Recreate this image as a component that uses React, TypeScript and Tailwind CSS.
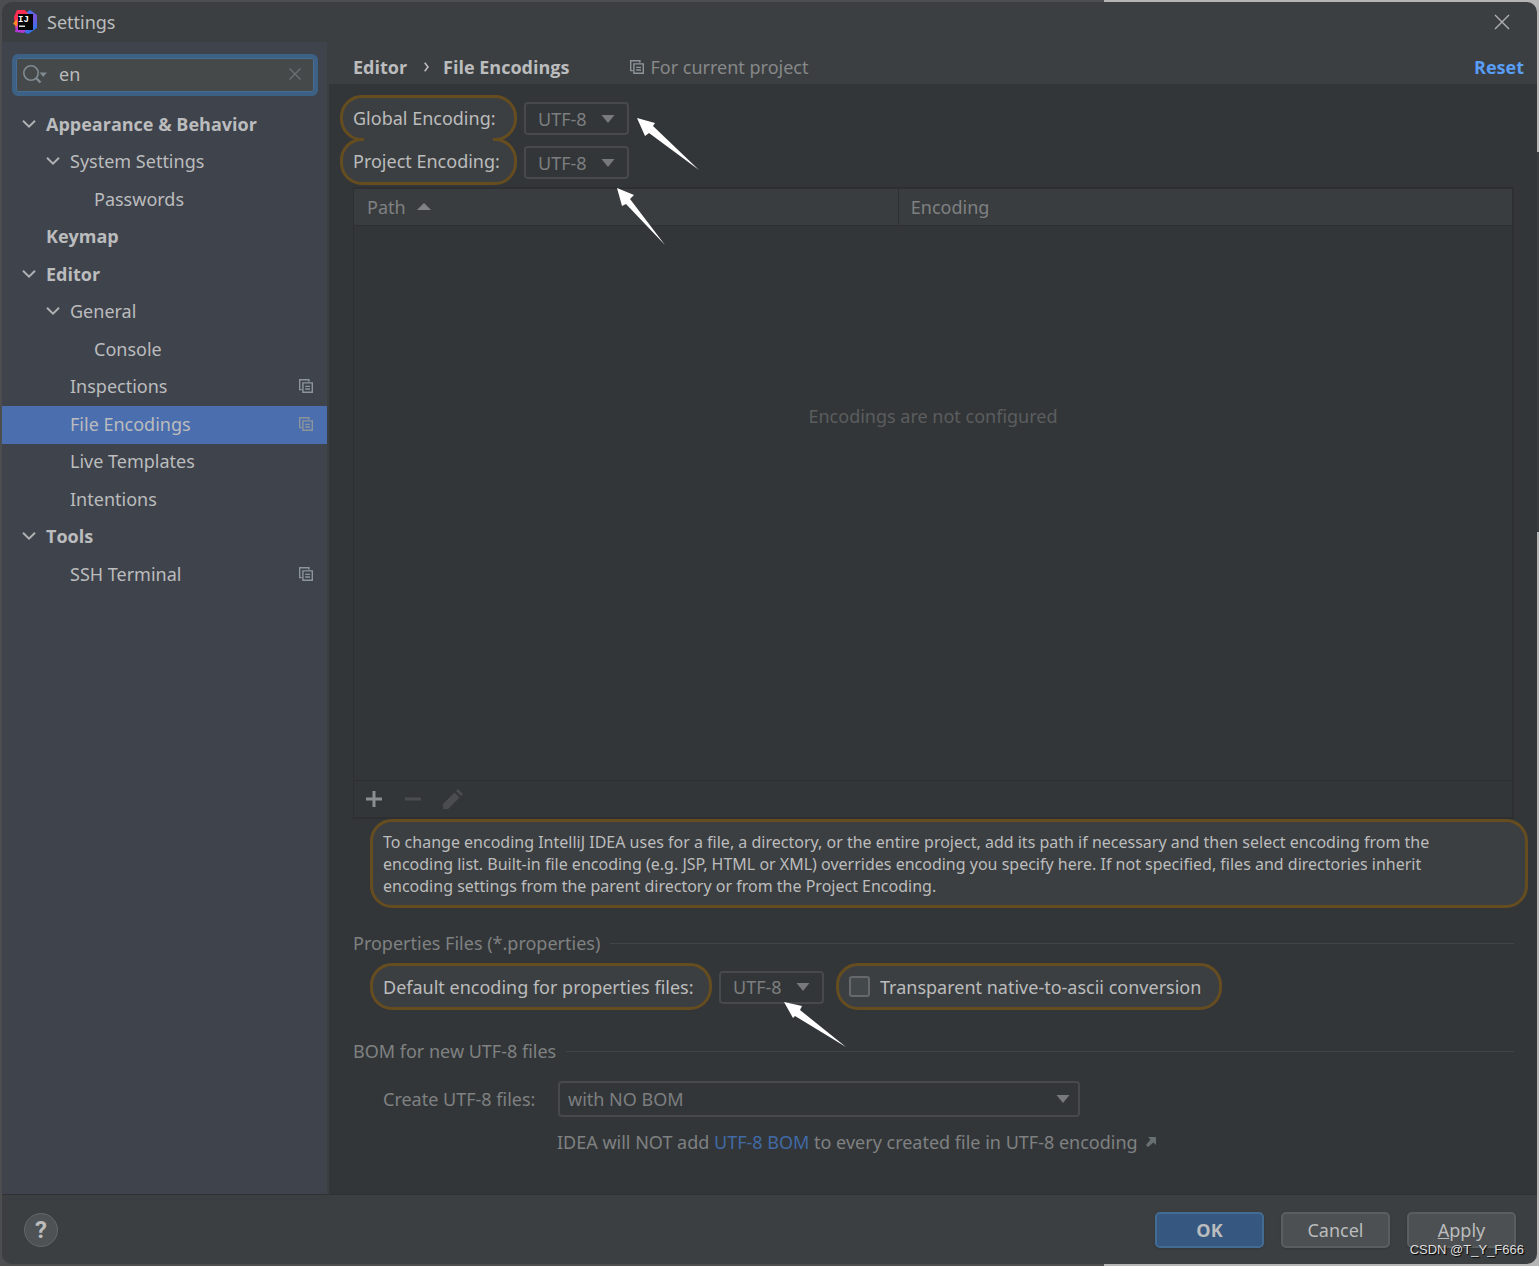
import { useState } from 'react';

type TreeItem = {
  label: string;
  depth: number;
  open?: boolean;
  bold?: boolean;
  project?: boolean;
};

const tree: TreeItem[] = [
  { label: 'Appearance & Behavior', depth: 0, open: true, bold: true },
  { label: 'System Settings', depth: 1, open: true },
  { label: 'Passwords', depth: 2 },
  { label: 'Keymap', depth: 0, bold: true },
  { label: 'Editor', depth: 0, open: true, bold: true },
  { label: 'General', depth: 1, open: true },
  { label: 'Console', depth: 2 },
  { label: 'Inspections', depth: 1, project: true },
  { label: 'File Encodings', depth: 1, project: true },
  { label: 'Live Templates', depth: 1 },
  { label: 'Intentions', depth: 1 },
  { label: 'Tools', depth: 0, open: true, bold: true },
  { label: 'SSH Terminal', depth: 1, project: true },
];

const indent = ['pl-5', 'pl-11', 'pl-[68px]'];

const encodings = ['UTF-8', 'GBK', 'ISO-8859-1'];

function Logo() {
  return (
    <svg className="size-6" viewBox="0 0 24 24" aria-hidden="true">
      <defs>
        <linearGradient id="hot" x1="0" y1="0" x2="0.3" y2="1">
          <stop offset="0" stopColor="#ff2d55" />
          <stop offset="0.5" stopColor="#f8304f" />
          <stop offset="1" stopColor="#a838d8" />
        </linearGradient>
        <linearGradient id="cool" x1="0.3" y1="0" x2="0.6" y2="1">
          <stop offset="0" stopColor="#2f7df6" />
          <stop offset="0.4" stopColor="#7a55d8" />
          <stop offset="1" stopColor="#2278f0" />
        </linearGradient>
      </defs>
      <path d="M11 4 17 0l7 5v13l-9 6-6-3z" fill="url(#cool)" />
      <path d="M4 0h8l4 5-9 16-4 1-1-6-1-9z" fill="url(#hot)" />
      <path d="M4 9 0 13.500 4 17z" fill="#ff8a1f" />
      <path d="M4 16 2 22l9 1 2-4z" fill="#b13bd0" />
      <rect x="5" y="4" width="15" height="16" fill="#050505" />
      <text x="5" y="12" fontFamily="Liberation Mono" fontWeight="700" fontSize="9" fill="#fff">IJ</text>
      <rect x="6" y="15.500" width="6" height="1.500" fill="#ddd" />
    </svg>
  );
}

function ProjectIcon() {
  return (
    <svg className="size-[14px] shrink-0 text-[#8d959b]" viewBox="0 0 14 14" fill="none" stroke="currentColor" strokeWidth="1.4" aria-hidden="true">
      <path d="M2.800 10.600H.7V.7h9.200v2" />
      <path d="M3.900 3.900h9.400v9.400H3.900zM6.200 7.400h4.800M6.200 10h4.800" />
    </svg>
  );
}

function Chevron() {
  return (
    <svg className="h-2 w-[14px]" viewBox="0 0 14 8" fill="none" stroke="#afb1b3" strokeWidth="2" aria-hidden="true">
      <path d="M1 .8 7 6.600 13 .8" />
    </svg>
  );
}

function Select({ id, options, wide }: { id: string; options: string[]; wide?: boolean }) {
  return (
    <div className={wide ? 'grid w-[522px] items-center' : 'grid w-[105px] items-center'}>
      <select
        id={id}
        className={`col-start-1 row-start-1 w-full appearance-none rounded-[4px] border-2 border-[#47494a] bg-transparent text-[#7c7e80] outline-none ${wide ? 'h-9 pl-2' : 'h-[33px] pl-3'}`}
      >
        {options.map((option) => (
          <option key={option}>{option}</option>
        ))}
      </select>
      <svg className={`pointer-events-none col-start-1 row-start-1 h-2 w-[14px] justify-self-end ${wide ? 'mr-[10px]' : 'mr-[14px]'}`} viewBox="0 0 14 8" aria-hidden="true">
        <path d="M.5 0h13L7 8z" fill="#77797b" />
      </svg>
    </div>
  );
}

const highlight = 'flex items-center rounded-[22px] border-[3px] border-[#664d20] bg-[#3c3f41] text-[#bbbcbd]';

function SectionTitle({ children }: { children: React.ReactNode }) {
  return (
    <h2 className="flex items-center gap-[10px] text-[#7f8182]">
      {children}
      <span className="h-px flex-1 bg-[#424547]" />
    </h2>
  );
}

export default function App() {
  const [query, setQuery] = useState('en');

  return (
    <div className="flex min-h-screen bg-[#4c4d4e] bg-[linear-gradient(to_bottom,#b5b5b5_12%,#3c3d3e_12%_42%,#b5b5b5_42%),linear-gradient(to_right,#4c4d4e_1104px,#b5b5b5_1104px)] bg-[length:2px_100%,100%_100%] bg-right bg-no-repeat p-[2px] font-['Noto_Sans',sans-serif] text-[18px] leading-6 text-[#bbbcbd]">
      <div className="flex flex-1 flex-col overflow-hidden rounded-[10px] bg-[#3c3f41]">
        <header className="flex h-10 items-center gap-[10px] pr-[27px] pb-px pl-[11px]">
          <Logo />
          <h1 className="flex-1">Settings</h1>
          <button type="button" aria-label="Close">
            <svg className="size-4" viewBox="0 0 16 16" stroke="#afb1b3" strokeWidth="1.4" aria-hidden="true">
              <path d="m1 1 14 14M15 1 1 15" />
            </svg>
          </button>
        </header>

        <div className="flex flex-1">
          <aside className="mr-[2px] w-[325px] shrink-0 bg-[#3f434c]">
            <label className="mx-[10px] mt-3 mr-[9px] flex h-[42px] items-center rounded-[6px] border-4 border-[#3d6185] bg-[#45494a] pr-[13px] pb-[2px] pl-[7px] outline-1 -outline-offset-5 outline-[#466d94]">
              <svg className="h-5 w-6 shrink-0" viewBox="0 0 24 20" fill="none" stroke="#7f8b91" strokeWidth="1.6" aria-hidden="true">
                <circle cx="8" cy="9" r="7.200" />
                <path d="m13 14 4.500 4.500" strokeWidth="2.400" />
                <path d="M16.500 8.500H24L20.200 13z" fill="#7f8b91" stroke="none" />
              </svg>
              <input
                aria-label="Search settings"
                value={query}
                onChange={(e) => setQuery(e.target.value)}
                className="ml-3 min-w-0 flex-1 bg-transparent outline-none"
              />
              <button type="button" aria-label="Clear search" onClick={() => setQuery('')}>
                <svg className="size-3" viewBox="0 0 12 12" stroke="#6d7072" strokeWidth="1.4" aria-hidden="true">
                  <path d="m.5.5 11 11M11.500.5l-11 11" />
                </svg>
              </button>
            </label>

            <ul className="mt-[10px]">
              {tree.map((item) => (
                <li
                  key={item.label}
                  className={`flex items-center pr-[14px] pb-[3px] odd:h-[38px] even:h-[37px] ${indent[item.depth]} ${item.label === 'File Encodings' ? 'bg-[#4b6eaf]' : ''} ${item.bold ? "font-['Open_Sans',sans-serif] font-bold" : ''}`}
                >
                  <span className="w-6 shrink-0">{item.open && <Chevron />}</span>
                  <a href="#" className="flex-1">{item.label}</a>
                  {item.project && <ProjectIcon />}
                </li>
              ))}
            </ul>
          </aside>

          <main className="flex flex-1 flex-col bg-[#333638]">
            <div className="flex h-[42px] items-center bg-[#3c3f41] pt-2 pr-[13px] pl-6">
              <nav className="flex items-center font-['Open_Sans',sans-serif] font-bold">
                <a href="#">Editor</a>
                <svg className="mr-[14px] ml-[17px] h-[10px] w-[5px]" viewBox="0 0 5 10" fill="none" stroke="#bbb" strokeWidth="1.6" aria-hidden="true">
                  <path d="m.7.7 3.300 4.300L.7 9.300" />
                </svg>
                <span>File Encodings</span>
              </nav>
              <span className="ml-[61px] flex items-center gap-[6px] text-[#868889]">
                <ProjectIcon />
                For current project
              </span>
              <button type="button" className="ml-auto font-['Open_Sans',sans-serif] font-bold text-[#589df6]">Reset</button>
            </div>

            <div className="flex flex-1 flex-col pr-[23px] pl-6">
              <div className="-ml-[13px] flex gap-[7px] pt-[11px]">
                <div className="relative w-[177px]">
                  <div className={`${highlight} h-[46px] pl-[10px]`}>
                    <label htmlFor="global">Global Encoding:</label>
                  </div>
                  <div className={`${highlight} -mt-[3px] h-[47px] pb-px pl-[10px]`}>
                    <label htmlFor="project">Project Encoding:</label>
                  </div>
                  <span className="absolute inset-x-6 top-[43px] h-[3px] bg-[#3c3f41]" />
                </div>
                <div className="relative flex flex-col gap-[11px] pt-[7px]">
                  <Select id="global" options={encodings} />
                  <Select id="project" options={encodings} />
                  <svg className="pointer-events-none absolute top-[23px] left-[93px] h-[127px] w-[82px]" viewBox="0 0 82 127" fill="#fff" aria-hidden="true">
                    <path d="m20 0 18 5-2 3 46 44-50-37-4 3z" />
                    <path d="m0 70 17 7-4 4 35 46L9 86l-4 2z" />
                  </svg>
                </div>
              </div>

              <div className="mt-[2px] flex flex-1 flex-col border-2 border-l border-[#2d2f31]">
                <table className="w-full border-collapse text-left">
                  <thead>
                    <tr className="h-9 border-b border-[#2d2f31] bg-[#3a3d3f] text-[#7f8182]">
                      <th className="w-[47%] border-r border-[#2d2f31] pl-[13px] font-normal">
                        <span className="flex items-center gap-[11px]">
                          Path
                          <svg className="h-[7px] w-[14px]" viewBox="0 0 14 7" aria-hidden="true">
                            <path d="M0 7h14L7 0z" fill="#808284" />
                          </svg>
                        </span>
                      </th>
                      <th className="pl-3 font-normal">Encoding</th>
                    </tr>
                  </thead>
                  <tbody>
                    <tr>
                      <td colSpan={2} className="pt-[178px] text-center text-[#5b5d5f]">Encodings are not configured</td>
                    </tr>
                  </tbody>
                </table>
                <div className="mt-auto box-content flex h-9 items-center gap-[21px] border-t border-[#2d2f31] pl-[11px]">
                  <button type="button" aria-label="Add">
                    <svg className="size-[18px]" viewBox="0 0 18 18" stroke="#8b8e90" strokeWidth="3" aria-hidden="true">
                      <path d="M9 1v16M1 9h16" />
                    </svg>
                  </button>
                  <button type="button" aria-label="Remove" disabled>
                    <svg className="size-[18px]" viewBox="0 0 18 18" stroke="#4a4c4e" strokeWidth="3" aria-hidden="true">
                      <path d="M1 9h16" />
                    </svg>
                  </button>
                  <button type="button" aria-label="Edit" disabled>
                    <svg className="size-5" viewBox="0 0 20 20" fill="#4a4c4e" aria-hidden="true">
                      <path d="M0 20v-5L11.500 3.500l5 5L5 20zM13 2l2-2 5 5-2 2z" />
                    </svg>
                  </button>
                </div>
              </div>

              <div className={`${highlight} -mr-[14px] ml-[17px] h-[89px] pl-[10px] text-base leading-[22px]`}>
                <p>
                  To change encoding IntelliJ IDEA uses for a file, a directory, or the entire project, add its path if necessary and then select encoding from the
                  <br />
                  encoding list. Built-in file encoding (e.g. JSP, HTML or XML) overrides encoding you specify here. If not specified, files and directories inherit
                  <br />
                  encoding settings from the parent directory or from the Project Encoding.
                </p>
              </div>

              <section className="mt-[23px]">
                <SectionTitle>Properties Files (*.properties)</SectionTitle>
                <div className="relative mt-2 ml-[17px] flex items-center">
                  <div className={`${highlight} h-[47px] w-[342px] pl-[10px]`}>
                    <label htmlFor="properties">Default encoding for properties files:</label>
                  </div>
                  <div className="mr-3 ml-[7px] pt-px">
                    <Select id="properties" options={encodings} />
                  </div>
                  <label className={`${highlight} h-[47px] w-[386px] gap-[10px] pl-[10px]`}>
                    <input type="checkbox" className="size-[21px] appearance-none rounded-[3px] border-2 border-[#666869] bg-[#43484a]" />
                    Transparent native-to-ascii conversion
                  </label>
                  <svg className="pointer-events-none absolute top-[39px] left-[414px] h-[45px] w-[62px]" viewBox="0 0 62 45" fill="#fff" aria-hidden="true">
                    <path d="m0 0 18 4-2 4 46 37-51-31-2 2z" />
                  </svg>
                </div>
              </section>

              <section className="mt-[29px] pb-10">
                <SectionTitle>BOM for new UTF-8 files</SectionTitle>
                <div className="mt-[18px] ml-[30px] flex items-center text-[#7f8182]">
                  <label htmlFor="bom" className="w-[175px]">Create UTF-8 files:</label>
                  <Select id="bom" wide options={['with NO BOM', 'with BOM']} />
                </div>
                <p className="mt-[13px] ml-[204px] flex items-center text-[#7f8182]">
                  <span>
                    IDEA will NOT add <a href="#" className="text-[#416aa6]">UTF-8 BOM</a> to every created file in UTF-8 encoding
                  </span>
                  <svg className="ml-2 size-[10px]" viewBox="0 0 10 10" aria-hidden="true">
                    <path d="M2 0h8v8L7.500 5.500 2 10 0 8l4.500-5.500z" fill="#697073" />
                  </svg>
                </p>
              </section>
            </div>
          </main>
        </div>

        <footer className="relative flex h-[70px] items-center gap-[17px] border-t border-[#2f3133] pr-[21px] pl-[22px]">
          <button type="button" aria-label="Help" className="mr-auto size-[34px] rounded-full border border-[#64676a] bg-[#4e5254] font-['Roboto',sans-serif] text-[24px] font-bold">?</button>
          <button type="button" className="h-9 w-[109px] rounded-[5px] border-2 border-[#426c94] bg-[#365880] font-['Open_Sans',sans-serif] font-bold shadow-sm">OK</button>
          <button type="button" className="h-9 w-[109px] rounded-[5px] border-2 border-[#5b5e5f] bg-[#4c5052] shadow-sm">Cancel</button>
          <button type="button" className="h-9 w-[109px] rounded-[5px] border-2 border-[#5b5e5f] bg-[#4c5052] shadow-sm">
            <span className="underline">A</span>pply
          </button>
          <span className="absolute right-[13px] bottom-1 font-['Liberation_Sans',sans-serif] text-[13px] leading-5 text-[#dedede] [text-shadow:1px_1px_1px_#000]">CSDN @T_Y_F666</span>
        </footer>
      </div>
    </div>
  );
}
